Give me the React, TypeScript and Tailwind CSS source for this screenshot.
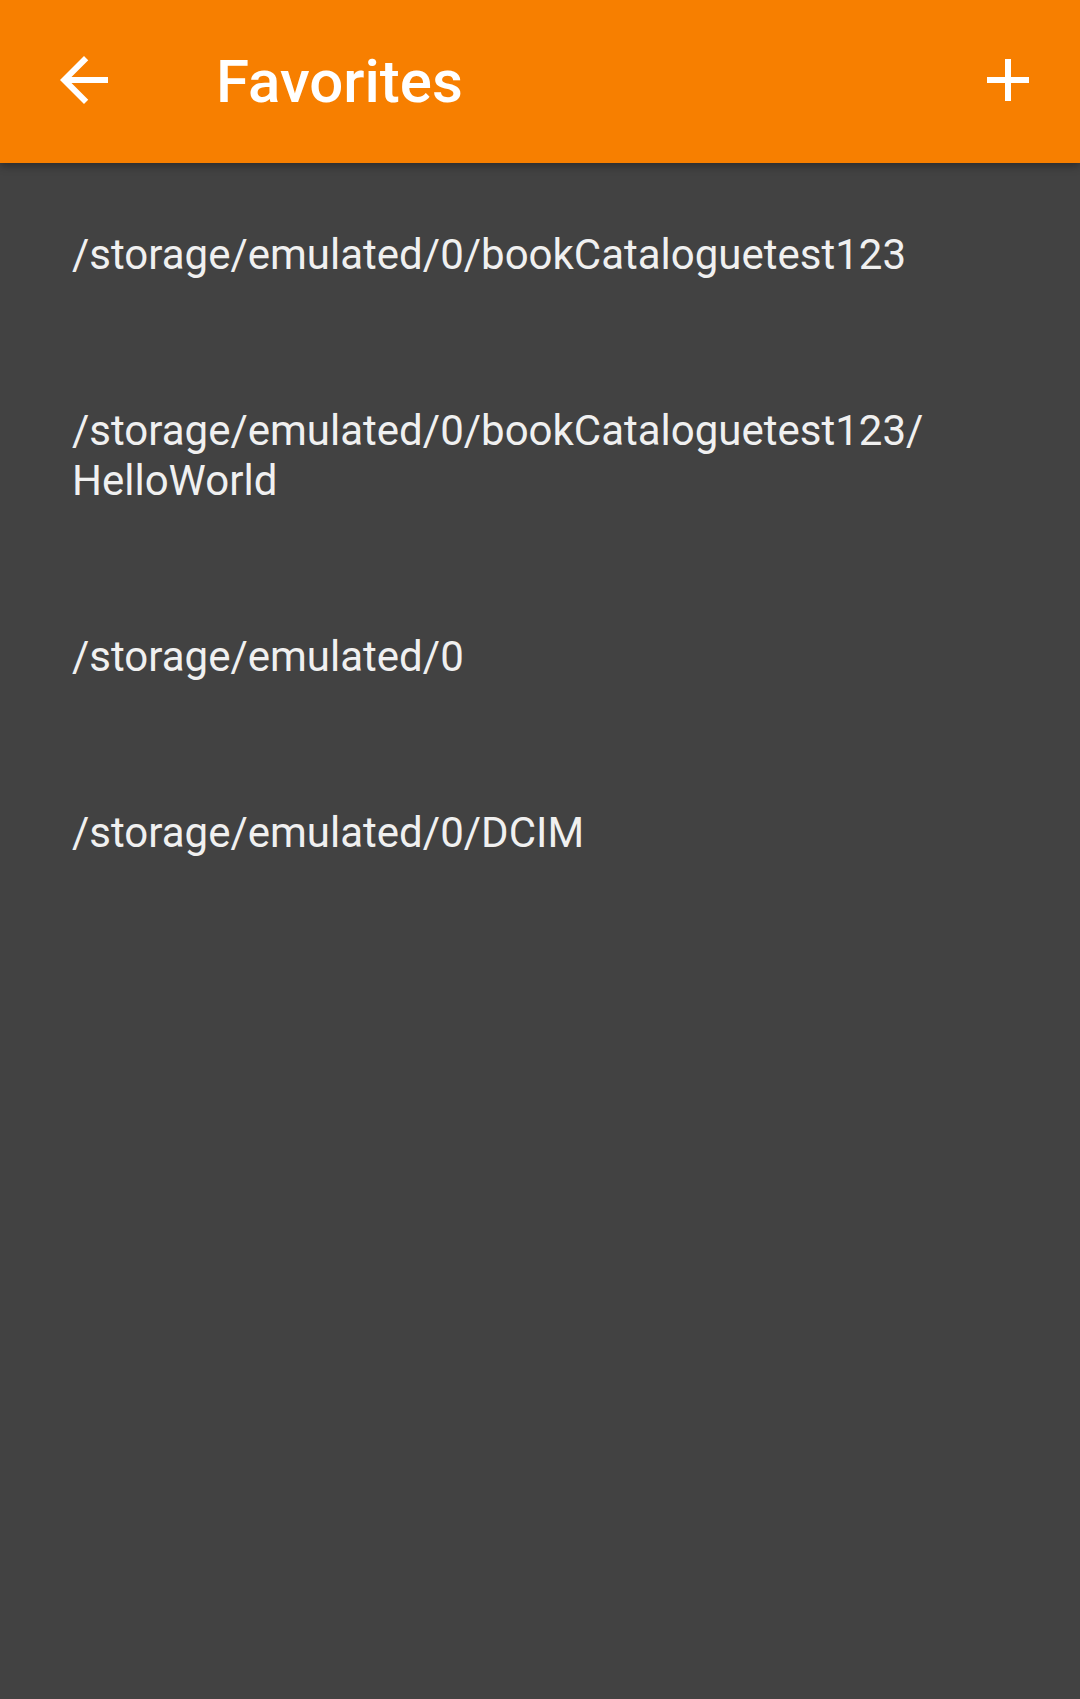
import React from 'react'

// favorite folders shown in the list
const FAVORITES = [
  '/storage/emulated/0/bookCataloguetest123',
  '/storage/emulated/0/bookCataloguetest123/HelloWorld',
  '/storage/emulated/0',
  '/storage/emulated/0/DCIM',
]

// let long paths wrap after a slash, like the Android TextView does
function PathText({ path }: { path: string }) {
  const parts = path.split('/')
  return (
    <>
      {parts.map((part, i) => (
        <React.Fragment key={i}>
          {part}
          {i < parts.length - 1 && (
            <>
              /<wbr />
            </>
          )}
        </React.Fragment>
      ))}
    </>
  )
}

export default function App() {
  return (
    <div className="min-h-screen bg-[#424242] font-[Roboto,sans-serif]">
      {/* toolbar */}
      <header className="relative z-10 h-[163px] bg-[#f77f00] flex items-start pt-[44px] pl-[48px] pr-[36px] shadow-[0_3px_8px_rgba(0,0,0,0.35)]">
        <button className="w-[72px] h-[72px] shrink-0">
          <svg viewBox="0 0 24 24" className="w-[72px] h-[72px] fill-white">
            <path d="M20 11H7.83l5.59-5.59L12 4l-8 8 8 8 1.41-1.41L7.83 13H20v-2z" />
          </svg>
        </button>
        <h1 className="ml-[96px] mt-[2px] text-[60px] leading-[72px] font-medium text-white">Favorites</h1>
        <button className="ml-auto w-[72px] h-[72px] shrink-0">
          <svg viewBox="0 0 24 24" className="w-[72px] h-[72px] fill-white">
            <path d="M19 13h-6v6h-2v-6H5v-2h6V5h2v6h6v2z" />
          </svg>
        </button>
      </header>

      {/* list */}
      <main className="pt-[4px]">
        {FAVORITES.map((path) => (
          <div key={path} className="px-[72px] py-[63px] text-[42px] leading-[50px] text-[#f0f0f0]">
            <PathText path={path} />
          </div>
        ))}
      </main>
    </div>
  )
}
